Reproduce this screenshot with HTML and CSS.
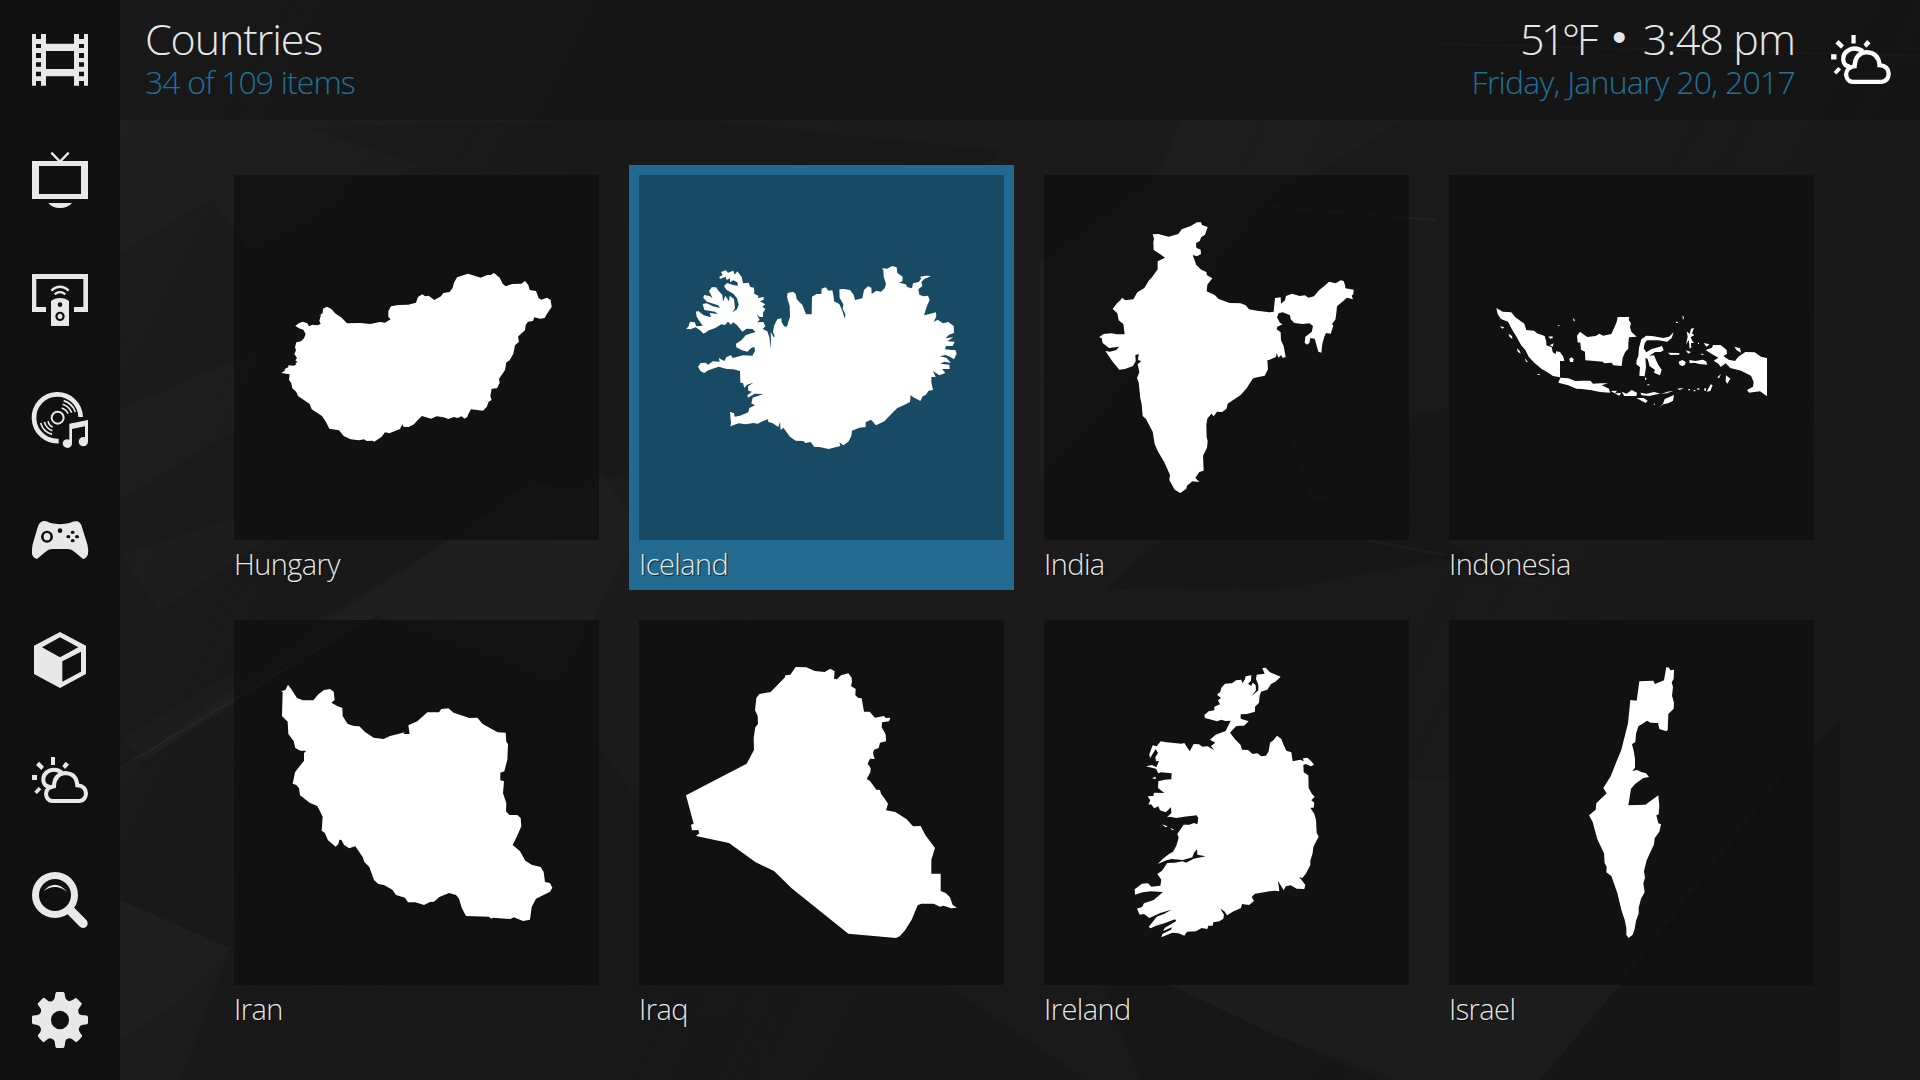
FILE: index.html
```html
<!DOCTYPE html>
<html lang="en">
<head>
<meta charset="utf-8">
<title>Countries</title>
<link rel="stylesheet" href="styles.css">
</head>
<body>
<svg class="backdrop" viewBox="0 0 1920 1080" aria-hidden="true">
  <defs>
    <linearGradient id="base" x1="0" y1="0" x2="1" y2="0.3">
      <stop offset="0" stop-color="#212121"/><stop offset=".3" stop-color="#1c1c1c"/><stop offset="1" stop-color="#191919"/>
    </linearGradient>
  </defs>
  <rect width="1920" height="1080" fill="url(#base)"/>
  <g fill="#000" fill-opacity=".09">
    <path d="M0 320L120 253 212 198 250 252 420 165 306 128 500 122 700 120 1000 150 900 300 640 470 565 490 530 480 450 540 300 640 0 860Z"/>
    <path d="M1086 945L1108 1000 1140 1080H1400L1275 1035Z"/>
    <path d="M1780 780L1620 985 1540 1080H1840V720Z"/>
    <path d="M1160 540L1285 425 1310 500H1325L1410 415 1500 400 1660 540 1668 575 1655 603 1580 590 1440 560 1280 590 1105 590Z"/>
    <path d="M375 615L145 760 120 790V900L230 948 180 1080H1086L940 980 850 930 760 840 640 800 560 700Z"/>
  </g>
  <g fill="#fff" fill-opacity=".015">
    <path d="M120 500L234 430 330 350 300 330 120 410Z"/>
    <path d="M120 555L234 518 340 440 520 330 600 326 530 370 330 500 160 610Z"/>
    <path d="M120 900L230 948 180 1000 120 1040Z"/>
    <path d="M450 540L530 480 565 490 600 470 640 530 560 680 545 682 500 660 375 615 145 760 120 740Z"/>
    <path d="M1040 262L1160 172 1180 120H1400L1265 206 1100 420 1040 480Z"/>
    <path d="M1086 945L1130 895 1300 780 1780 780 1620 985 1540 1080H1380L1275 1035Z"/>
    <path d="M1445 540H1660L1668 575 1655 603 1580 590 1510 580Z"/>
    <path d="M1285 425L1310 500H1325L1410 415 1400 400Z"/>
  </g>
  <g fill="none" stroke="#fff" stroke-opacity=".03" stroke-width="2">
    <path d="M1265 206L1410 218 1436 220M1440 44L1920 56M1365 540L1445 555M1640 390L1815 402"/>
    <path d="M120 768L375 615"/>
  </g>
</svg>

<div class="screen">
  <nav class="sidebar">
    <svg class="icon" viewBox="0 0 360 360"><path fill-rule="evenodd" d="M96 102H108V117H123V102H138V131H222V102H237V117H252V102H264V257H252V243H237V257H222V229H138V257H123V243H108V257H96ZM108 132V144H123V132ZM108 159V174H123V159ZM108 187V200H123V187ZM108 215V229H123V215ZM237 132V144H252V132ZM237 159V174H252V159ZM237 187V200H252V187ZM237 215V229H252V215ZM138 153V207H222V153Z"/></svg>
    <svg class="icon" viewBox="0 0 360 360"><path fill-rule="evenodd" d="M96 123H264V237H96ZM117 138V222H243V138ZM145 249H216Q204 264 180 264T145 249Z"/><path class="line" stroke-width="7" d="M154 98L179 124H181L206 98"/></svg>
    <svg class="icon" viewBox="0 0 360 360"><path d="M96 102H264V216H222V201H250V117H109V201H138V216H96Z"/><path fill-rule="evenodd" d="M153 258V183Q164 174 180 174T207 183V258ZM187 194A7 7 0 1 0 173 194A7 7 0 1 0 187 194ZM194 229A14 14 0 1 0 166 229A14 14 0 1 0 194 229Z"/><ellipse cx="180" cy="229" rx="7" ry="8"/><path class="line" stroke-width="7" d="M154 152Q180 129 206 152M164 163Q180 150 196 163"/></svg>
    <svg class="icon" viewBox="0 0 360 360"><path class="line" stroke-width="14" d="M176 243A70 70 0 1 1 242 171"/><circle class="line" stroke-width="6" cx="173" cy="173" r="18"/><path class="line" stroke-width="5" d="M191 122Q217 130 226 156M188 133Q208 140 215 158M185 144Q199 149 204 161M122 189Q129 215 156 223M133 186Q139 206 157 212M144 184Q148 198 158 201"/><path d="M208 191L264 180V244A14 14 0 1 1 255 232V199L216 207V251A14 13 0 1 1 208 239Z"/></svg>
    <svg class="icon" viewBox="0 0 360 360"><path fill-rule="evenodd" d="M130 123Q141 122 151 129Q180 136 209 129Q219 122 232 124Q243 128 246 142L262 193Q266 210 264 222Q260 235 249 237L224 216Q215 207 204 207H156Q145 207 136 216L111 237Q99 234 96 222Q95 207 98 193L113 142Q118 125 130 123ZM159 170A18 18 0 1 0 123 170A18 18 0 1 0 159 170ZM187 152A7 7 0 1 0 173 152A7 7 0 1 0 187 152ZM224 157A6 5 0 1 0 212 157A6 5 0 1 0 224 157ZM224 182A6 5 0 1 0 212 182A6 5 0 1 0 224 182ZM211 170A6 5 0 1 0 199 170A6 5 0 1 0 211 170ZM237 170A6 5 0 1 0 225 170A6 5 0 1 0 237 170Z"/><ellipse cx="141" cy="170" rx="10" ry="11"/></svg>
    <svg class="icon" viewBox="0 0 360 360"><path fill-rule="evenodd" d="M180 96L258 137V222L180 264 102 222V137ZM180 112L126 142 180 172 235 142ZM187 184V245L243 215V155Z"/></svg>
    <svg class="icon" viewBox="0 0 360 360"><use href="#weather"/></svg>
    <svg class="icon" viewBox="0 0 360 360"><circle class="line" stroke-width="21" cx="165" cy="165" r="58.5"/><path class="line" stroke-width="28" stroke-linecap="round" d="M212 212L249 250"/><path d="M131 153Q165 114 202 156Q167 128 131 153Z"/></svg>
    <svg class="icon" viewBox="0 0 360 360"><path fill-rule="evenodd" d="M165 107Q166 98 169 96H191Q195 98 195 109Q196 120 208 124Q216 122 228 113L245 130Q247 134 238 143Q232 151 237 162Q241 166 252 166Q262 166 264 170V190Q263 194 251 194Q239 195 237 205Q234 212 246 226Q248 230 230 246Q227 248 219 239Q210 231 201 237Q195 240 195 252Q194 262 190 264H169Q166 263 165 252Q165 240 157 237Q149 232 139 240Q133 248 129 246Q111 229 114 225Q124 217 123 207Q120 195 109 194Q98 194 96 190V170Q97 166 108 166Q118 166 123 156Q125 148 117 139Q111 132 114 130L129 114Q132 111 140 119Q148 127 156 124Q165 118 165 107ZM207 180A27 28 0 1 0 153 180A27 28 0 1 0 207 180Z"/></svg>
  </nav>

  <div class="main">
    <header class="topbar">
      <div class="heading">
        <h1 class="title">Countries</h1>
        <p class="subtitle">34 of 109 items</p>
      </div>
      <div class="status">
        <p class="title"><span class="temp">51°F</span> <span class="dot">•</span> <span class="clock">3:48 pm</span></p>
        <p class="subtitle date">Friday, January 20, 2017</p>
      </div>
      <svg class="weather" viewBox="90 100 180 160"><g id="weather">
        <path d="M153 111H165V135H153ZM96 165H111V180H96ZM117 125L132 140 124 150 108 135ZM197 125L207 134 195 147 187 138ZM116 201L124 208 111 222 103 215Z"/>
        <path class="line" stroke-width="12" d="M186 158Q170 145 150 151Q128 161 130 182Q133 200 149 200"/>
        <path class="line" stroke-width="12" d="M156 243Q140 241 138 222Q139 202 162 199Q163 162 196 159Q230 161 232 196Q257 198 258 220Q257 241 238 243Z"/>
      </g></svg>
    </header>

    <main class="grid">
      <article class="card">
        <svg class="thumb" viewBox="12 15 1095 1095"><path d="M154 609L163 603 167 595 175 592 175 586 192 587 199 583 196 579 203 577 196 571 201 564 193 552 198 541 195 532 199 517 213 514 222 505 227 492 220 479 207 475 196 468 206 460 218 455 232 460 237 469 247 464 262 466 272 462 268 452 273 435 267 438 278 429 279 416 291 410 304 417 317 431 335 443 351 460 390 459 421 462 450 456 465 458 482 448 475 441 475 424 483 409 505 405 535 404 558 398 564 381 577 373 585 379 596 377 613 390 633 379 640 369 659 366 668 353 672 338 681 322 714 311 752 323 771 315 782 315 792 309 809 323 818 341 827 349 846 342 874 341 885 333 895 345 899 360 918 363 926 385 934 389 951 383 962 390 965 411 951 431 944 444 930 446 913 442 909 453 894 455 887 465 885 481 869 495 864 500 867 515 855 526 850 551 839 571 829 577 825 600 815 615 807 627 809 639 801 655 785 656 781 678 785 690 776 695 770 711 759 722 723 718 715 732 712 741 703 746 695 739 683 744 671 741 655 747 641 742 620 739 603 746 576 738 561 752 552 763 536 771 520 770 517 763 510 777 478 790 465 787 455 800 444 808 433 815 427 812 410 813 402 808 387 811 362 808 341 798 327 781 298 776 288 756 276 738 245 718 239 702 204 678 199 666 187 655 184 640 177 629 179 613Z"/></svg>
        <p class="label">Hungary</p>
      </article>
      <article class="card focused">
        <svg class="thumb" viewBox="42 45 1095 1095"><path d="M183 506L190 500 195 485 209 487 214 499 233 497 225 486 215 470 213 455 220 453 236 466 258 472 254 459 278 462 270 455 238 450 233 432 245 430 264 439 285 444 279 436 246 425 235 414 237 405 253 408 262 414 257 403 252 394 260 382 273 382 281 393 292 404 294 425 301 407 312 424 314 407 327 417 330 445 322 457 336 448 341 434 336 415 325 401 304 389 297 378 306 369 327 376 339 377 337 367 325 361 315 367 315 355 305 360 302 350 285 357 283 350 293 346 288 336 302 331 309 338 325 332 329 344 337 334 350 351 354 370 371 368 376 381 387 383 388 402 400 407 399 414 416 411 416 419 405 424 421 433 412 440 421 447 414 458 414 471 403 470 395 461 404 480 396 487 415 486 421 499 413 507 427 514 434 535 436 566 438 542 437 515 446 532 449 529 444 515 448 495 457 478 469 475 470 486 477 499 486 500 490 485 495 470 494 438 486 411 488 399 504 395 512 402 515 417 525 428 532 434 543 463 560 463 561 410 575 402 589 402 590 386 602 382 610 392 622 391 626 410 627 424 643 432 652 453 660 477 661 463 653 446 655 433 644 414 643 388 656 387 675 390 686 404 690 420 712 415 717 390 729 379 739 383 740 402 754 392 768 395 779 385 783 371 776 350 775 331 771 325 787 326 801 318 815 322 817 339 833 350 832 364 822 368 843 373 846 381 861 385 864 370 881 366 888 357 886 350 903 347 918 348 898 357 889 366 892 378 880 388 883 404 895 409 909 407 914 420 906 437 897 466 917 461 933 457 934 469 926 486 938 479 954 490 970 486 986 498 987 519 972 524 962 535 985 532 967 544 989 545 983 558 963 558 960 568 981 570 991 570 995 581 987 598 975 590 962 585 944 589 964 593 978 609 958 605 946 611 973 614 974 627 951 627 961 639 943 646 924 633 932 651 919 651 919 667 924 690 911 692 902 705 893 709 886 723 864 711 857 705 855 726 836 736 817 744 804 757 778 784 753 796 738 779 722 787 722 801 703 803 681 812 679 828 670 845 655 856 643 847 646 858 611 867 583 861 568 861 557 846 541 849 535 843 512 842 495 830 475 803 467 810 465 785 460 801 442 789 430 786 429 778 409 785 399 791 385 789 362 793 341 790 316 799 318 789 315 756 327 760 329 770 345 767 370 757 373 744 390 736 379 730 383 713 400 707 415 702 389 701 369 713 367 706 381 695 370 692 369 679 385 668 366 674 358 684 354 669 346 668 345 633 325 628 305 627 281 620 259 628 250 631 238 639 227 634 219 620 227 609 242 608 249 614 264 604 284 605 281 594 298 603 304 592 318 585 323 594 354 586 382 587 390 572 388 560 379 564 367 575 351 571 334 562 333 551 349 541 362 526 379 520 392 516 382 507 365 506 352 515 343 504 335 494 324 487 318 494 309 485 300 495 289 493 271 504 252 511 236 521 224 510 212 502 196 508Z"/></svg>
        <p class="label">Iceland</p>
      </article>
      <article class="card">
        <svg class="thumb" viewBox="12 15 1095 1095"><path d="M177 502L191 492 215 490 230 493 254 493 250 462 236 451 232 430 218 417 231 400 241 391 246 383 256 391 280 388 292 367 313 354 327 331 336 322 353 298 353 274 375 263 361 253 341 240 340 216 342 206 338 193 355 192 386 200 415 192 425 178 452 168 471 157 483 157 486 165 503 171 495 194 483 202 480 212 468 220 469 233 482 239 483 252 471 259 458 255 469 285 484 299 499 306 501 316 517 325 502 344 500 364 524 375 536 387 569 399 602 400 617 406 627 418 651 422 688 427 701 425 705 384 722 382 723 401 735 391 738 378 756 371 779 378 795 376 805 383 822 379 837 361 852 349 867 335 887 340 902 331 911 333 915 345 916 355 941 359 940 372 935 377 939 388 921 383 906 396 891 409 889 430 886 449 876 462 880 467 872 491 858 489 853 500 847 521 844 548 835 545 830 527 824 506 811 504 808 519 801 524 794 518 796 500 815 486 819 468 808 460 788 462 763 459 752 448 750 436 728 427 716 430 711 442 720 459 728 463 712 470 710 478 722 487 723 511 731 528 737 562 727 563 724 555 715 563 710 548 713 531 708 561 689 569 682 571 684 598 674 617 642 624 637 628 620 655 602 675 584 687 563 701 559 717 546 726 531 725 521 739 514 731 502 746 499 764 500 800 503 814 501 833 489 857 491 902 478 906 466 923 471 929 478 936 457 934 441 947 439 956 421 969 404 959 388 930 390 915 373 877 353 843 344 822 338 785 318 747 308 738 305 703 301 685 296 637 291 624 298 607 293 583 304 573 294 570 296 552 286 555 287 574 279 588 255 597 238 599 218 575 196 543 210 545 229 540 237 530 207 534 188 519 185 504Z"/></svg>
        <p class="label">India</p>
      </article>
      <article class="card">
        <svg class="thumb" viewBox="12 15 1095 1095"><path d="M154 414L173 425 199 427 211 442 238 461 244 480 267 482 276 490 299 498 304 516 304 526 320 532 323 546 332 553 333 544 345 546 355 560 358 573 345 573 345 622 324 618 305 605 290 597 268 578 251 560 241 540 228 525 215 501 202 480 189 455 168 447 158 432Z"/><path d="M340 638L346 623 370 625 391 633 414 632 436 632 444 641 465 640 489 640 470 646 492 656 495 668 465 666 440 661 410 657 394 656 370 646Z"/><path d="M396 497L405 485 415 493 427 501 452 498 463 491 475 497 499 492 509 470 515 456 518 441 553 441 551 450 558 460 555 471 559 485 575 500 552 502 550 520 550 536 541 545 533 563 530 588 505 586 500 578 477 580 474 575 440 572 421 571 420 545 408 539 406 518 398 517Z"/><path d="M589 508L604 497 621 498 655 504 672 500 686 487 680 504 667 515 640 511 606 511 599 520 596 535 604 547 620 537 640 532 651 528 656 541 647 546 630 546 613 557 627 556 634 572 640 585 650 599 645 616 627 608 630 599 614 589 608 567 601 564 603 590 599 619 583 617 585 592 574 583 575 570 580 558 582 533Z"/><path d="M782 540L801 533 804 525 827 525 845 540 846 552 835 558 851 569 870 573 880 560 901 546 929 547 948 560 966 564V679L945 664 912 668 906 660 924 650 926 636 918 617 888 602 856 594 842 580 827 591 821 582 806 572 820 563 799 551Z"/><path d="M165 469L178 472 172 476ZM190 491L201 498 202 507 194 501ZM216 535L224 542 227 551 218 545ZM239 564L249 577 243 575ZM278 612H284V615H278ZM338 465L345 466 341 469ZM383 444L390 450 387 455ZM392 465L399 467ZM310 500L322 499 324 504 316 506ZM314 526L326 520 323 530ZM373 566L380 562 386 568 384 576 375 576ZM669 548L703 549 703 554 676 555ZM701 575L712 570 722 576 720 584 713 588 704 585ZM733 570L751 573 773 569 783 574 787 584 763 582 748 578 734 580ZM712 436L717 442 714 450ZM693 455H698V459H693ZM725 484L734 492 738 476 747 474 741 490 748 496 737 501 742 513 747 519 738 519 739 532 734 536 731 510 723 524 728 500ZM722 541L738 546 730 551ZM765 551L778 552 772 555ZM776 519L794 523 784 530ZM868 530L885 535 888 548 875 541ZM843 616L856 626 847 641 842 634ZM817 622L828 612 822 625ZM797 643L803 646 796 663 785 665ZM497 663L516 662 510 670 528 669 523 677ZM530 665L545 671 560 660 576 668 574 678 538 678ZM586 668L604 671 628 666 647 672 668 665 686 662 665 670 635 673 613 678 590 676ZM696 656L717 654 704 660ZM574 684L596 684 608 692 602 699ZM643 711L654 701 659 687 687 675 684 692 669 700 655 703ZM730 657H735V661H730ZM746 660H751V664H746ZM757 655H763V659H757ZM778 655H783V662H778ZM600 623H604V629H600ZM607 643H613V646H607ZM759 518H762V522H759ZM626 701H630V704H626Z"/></svg>
        <p class="label">Indonesia</p>
      </article>
      <article class="card">
        <svg class="thumb" viewBox="12 15 1095 1095"><path d="M153 229L166 225 174 209 183 221 201 249 219 256 250 256 265 238 282 225 300 222 311 230 314 255 304 263 322 273 337 279 338 303 353 327 372 333 388 334 405 351 431 368 461 372 480 363 516 354 524 352 520 357 539 357 535 331 562 319 592 292 627 292 634 282 655 280 671 293 718 309 742 308 758 327 803 352 827 353 829 381 834 387 832 434 823 469 811 473 811 496 822 499 819 535 829 564 828 589 838 600 862 600 872 609 874 634 861 664 848 690 870 709 886 737 905 749 932 756 941 771 945 801 960 804 967 818 960 830 918 851 905 876 900 914 879 918 851 907 842 912 788 908 785 911 776 905 708 903 695 878 687 851 678 840 657 834 628 846 612 860 600 861 582 870 556 862 534 862 525 848 498 840 487 824 462 810 445 807 432 795 418 756 403 741 398 726 376 694 357 700 342 689 334 675 328 674 325 687 317 695 294 676 284 653 275 647 278 605 262 573 240 564 210 541 207 520 199 510 188 506 195 472 222 437 222 414 229 407 211 407 196 399 191 378 175 357 173 320 156 303 158 231Z"/></svg>
        <p class="label">Iran</p>
      </article>
      <article class="card">
        <svg class="thumb" viewBox="12 15 1095 1095"><path d="M153 541L335 446 357 405 356 368 361 337 369 326 368 302 360 286 364 249 373 237 407 231 450 187 451 181 466 179 482 156 514 157 539 168 569 171 586 161 599 169 597 191 606 193 618 181 640 175 650 188 651 201 648 213 662 222 661 241 670 249 680 250 687 290 704 290 720 308 747 303 752 309 766 308 762 319 741 322 740 337 752 358 753 379 735 383 731 399 717 404 714 415 719 432 705 431 698 446 707 459 706 472 695 492 705 498 724 524 735 525 738 536 750 553 759 566 753 586 781 591 815 613 834 634 857 633 871 660 900 699 889 734V776H917V828L932 834 945 847 953 870 966 878 948 880 926 872 915 875 896 866 859 866 848 871 830 914 809 947 794 964 783 969 640 956 470 820 417 768 362 742 282 684 183 663 193 655 190 645 171 646 168 629 176 626Z"/></svg>
        <p class="label">Iraq</p>
      </article>
      <article class="card">
        <svg class="thumb" viewBox="12 15 1095 1095"><path d="M493 300L506 289 523 286 523 275 540 268 534 256 543 249 531 239 541 230 544 218 555 206 576 205 588 196 604 194 607 205 615 193 617 184 634 181 633 197 624 207 634 212 638 203 647 210 648 226 635 243 655 226 655 209 648 192 650 179 674 176 667 159 677 158 690 172 722 185 706 200 693 207 682 224 663 230 659 242 657 263 645 275 645 290 620 297 602 298 602 311 626 319 612 332 599 332 588 334 570 353 585 373 602 390 606 404 624 405 638 417 652 415 664 424 678 422 686 409 690 383 700 376 711 362 724 372 730 388 739 407 754 412 758 439 781 434 791 439 789 430 802 428 813 438 822 449 813 454 797 447 790 450 791 472 805 481 806 519 816 537 824 545 814 556 823 563 821 578 811 578 823 597 828 615 830 653 836 665 829 678 820 696 818 714 811 737 811 750 797 777 787 789 778 787 796 809 793 822 770 821 752 811 738 814 731 826 714 797 718 829 705 827 689 829 645 836 635 846 642 858 627 870 606 867 603 879 581 889 561 901 553 889 541 881 552 899 550 911 538 919 520 922 518 932 505 932 502 942 485 939 468 949 441 950 433 962 416 955 397 953 364 967 367 957 393 944 396 937 369 948 375 938 409 918 405 913 373 925 348 932 332 940 326 936 350 905 373 896 394 884 361 894 328 909 312 897 299 899 291 881 306 876 312 865 341 855 369 831 333 829 308 832 285 839 284 823 306 806 324 805 334 815 361 812 364 794 352 777 366 767 382 744 404 743 428 739 438 743 461 731 497 724 472 719 471 703 462 713 457 727 429 735 395 732 379 736 353 747 368 732 386 718 399 710 409 692 416 668 412 657 422 642 431 629 448 629 462 624 472 628 475 610 470 601 432 605 409 609 390 605 381 607 394 594 393 577 377 592 360 586 355 574 343 580 333 568 325 569 331 556 323 544 340 543 342 533 373 534 354 519 355 499 374 494 394 493 395 475 363 472 355 475 348 461 318 454 336 450 349 457 357 438 348 439 346 426 354 414 347 402 330 430 328 418 338 391 350 394 362 379 380 382 424 386 433 384 449 409 461 387 477 388 487 395 503 394 523 406 513 393 526 383 510 374 527 359 557 348 572 317 556 318 544 314 531 319 495 309ZM365 628L383 634 377 637ZM390 638L402 644 397 646ZM336 489L348 485 346 493Z"/></svg>
        <p class="label">Ireland</p>
      </article>
      <article class="card">
        <svg class="thumb" viewBox="12 15 1095 1095"><path d="M664 156L672 158 676 166 687 164 686 192 680 202 684 216 681 242 687 263 686 281 670 297 668 345 664 349 643 342 639 324 617 323 606 317 595 325 580 334 573 356 571 381 561 388 566 407 570 431 570 458 562 468 576 465 589 471 603 475 612 486 595 489 571 506 558 521 550 571 601 569 640 541 643 572 641 598 634 601 640 625 648 628 643 650 629 670 627 688 605 736 597 768 600 788 595 805 599 832 588 851 581 878 581 896 573 917 569 942 563 959 551 969 544 960 544 938 539 914 530 888 517 834 499 783 484 772 485 755 479 745 477 715 457 673 443 621 432 601 452 584 454 565 485 535 475 519 497 484 514 441 529 404 549 325 556 255 575 257 583 199 625 197 630 207 657 196Z"/></svg>
        <p class="label">Israel</p>
      </article>
    </main>
  </div>
</div>
</body>
</html>
```
FILE: styles.css
```css
* { box-sizing: border-box; }

body {
  margin: 0;
  width: 1920px;
  height: 1080px;
  overflow: hidden;
  background: #1b1b1b;
  color: #e6e6e6;
  font-family: "Open Sans", "Noto Sans", sans-serif;
  font-weight: 300;
}

h1, p { margin: 0; font-weight: 300; }

.backdrop {
  position: absolute;
  inset: 0;
  width: 1920px;
  height: 1080px;
  z-index: -1;
}

.screen { display: flex; height: 1080px; }

.sidebar {
  display: flex;
  flex-direction: column;
  width: 120px;
  background: rgba(15, 15, 15, .88);
}

.icon { display: block; width: 120px; height: 120px; fill: #e8e8e8; color: #e8e8e8; }
.line { fill: none; stroke: currentColor; }

.main { width: 1800px; }

.topbar {
  display: flex;
  height: 120px;
  padding: 14px 27px 0 25px;
  background: rgba(12, 12, 12, .34);
}

.status { margin-left: auto; text-align: right; }

.title {
  height: 50px;
  line-height: 50px;
  font-size: 43px;
  letter-spacing: -1.1px;
  white-space: nowrap;
}
.status .title { display: flex; justify-content: flex-end; }
.temp { letter-spacing: -3.6px; }
.dot { width: 48px; text-align: center; font-family: "DejaVu Sans", sans-serif; font-size: 40px; line-height: 47px; }
.clock { letter-spacing: -.9px; margin-right: 1px; }

.subtitle {
  height: 36px;
  line-height: 36px;
  font-size: 32px;
  letter-spacing: -.9px;
  color: #22709a;
  white-space: nowrap;
}
.subtitle.date { letter-spacing: -.75px; margin-right: 1px; }

.weather { width: 64px; height: 57px; margin: 17px 0 0 33px; fill: #fff; color: #fff; }

.grid {
  display: grid;
  grid-template-columns: repeat(4, 365px);
  grid-auto-rows: 405px;
  gap: 40px;
  padding: 55px 0 0 114px;
}

.card.focused { margin: -10px; padding: 10px; background: #226a90; }

.thumb { display: block; width: 365px; height: 365px; background: rgba(12, 12, 12, .6); fill: #fff; }
.focused .thumb { background: #194a63; }

.label {
  height: 40px;
  line-height: 40px;
  padding-top: 4px;
  font-size: 29px;
  letter-spacing: -.6px;
  white-space: nowrap;
  text-shadow: 1px 1px 1px rgba(0, 0, 0, .7);
}
```
